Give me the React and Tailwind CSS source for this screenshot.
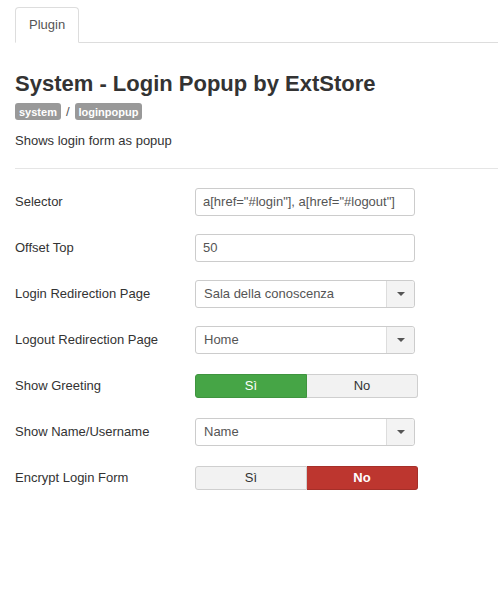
import React from 'react'

const Caret = () => (
  <svg width="8" height="4" viewBox="0 0 8 4" className="block">
    <path d="M0 0 L8 0 L4 4 Z" fill="#555" />
  </svg>
)

const TextField = ({ value }) => (
  <div className="w-[220px] h-[28px] border border-[#cccccc] rounded-[3px] bg-white flex items-center px-[7px] text-[13px] text-[#555]">
    {value}
  </div>
)

const SelectField = ({ value }) => (
  <div className="w-[220px] h-[28px] border border-[#cccccc] rounded-[3px] bg-white flex text-[13px] text-[#555]">
    <div className="flex-1 flex items-center px-[8px]">{value}</div>
    <div className="w-[28px] border-l border-[#dddddd] bg-[#f3f3f3] rounded-r-[3px] flex items-center justify-center">
      <Caret />
    </div>
  </div>
)

const Toggle = ({ on }) => (
  <div className="w-[223px] h-[24px] flex text-[13px]">
    <div
      className={
        on
          ? 'flex-1 flex items-center justify-center rounded-l-[3px] bg-[#46a546] border border-[#3f943f] text-white'
          : 'flex-1 flex items-center justify-center rounded-l-[3px] bg-[#f2f2f2] border border-[#cfcfcf] text-[#333]'
      }
    >
      Sì
    </div>
    <div
      className={
        on
          ? 'flex-1 flex items-center justify-center rounded-r-[3px] bg-[#f2f2f2] border border-l-0 border-[#cfcfcf] text-[#333]'
          : 'flex-1 flex items-center justify-center rounded-r-[3px] bg-[#bd362f] border border-l-0 border-[#a52f29] text-white font-bold'
      }
    >
      No
    </div>
  </div>
)

const fields = [
  { label: 'Selector', el: <TextField value='a[href="#login"], a[href="#logout"]' /> },
  { label: 'Offset Top', el: <TextField value="50" /> },
  { label: 'Login Redirection Page', el: <SelectField value="Sala della conoscenza" /> },
  { label: 'Logout Redirection Page', el: <SelectField value="Home" /> },
  { label: 'Show Greeting', el: <Toggle on /> },
  { label: 'Show Name/Username', el: <SelectField value="Name" /> },
  { label: 'Encrypt Login Form', el: <Toggle on={false} /> },
]

export default function App() {
  return (
    <div className="w-[498px] h-[594px] bg-white pl-[15px] pt-[7px] text-[#333] font-['Liberation_Sans',Arial,sans-serif]">
      <div className="flex border-b border-[#dddddd]">
        <div className="h-[36px] -mb-px px-[13px] border border-b-white border-[#dddddd] rounded-t-[4px] bg-white flex items-center text-[13px] text-[#555]">
          Plugin
        </div>
      </div>

      <h1 className="mt-[28px] text-[22px] leading-[26px] font-bold text-[#333]">
        System - Login Popup by ExtStore
      </h1>

      <div className="mt-[5px] flex items-center gap-[5px]">
        <span className="h-[17px] px-[4px] rounded-[3px] bg-[#999] text-white text-[11px] font-bold flex items-center">system</span>
        <span className="text-[13px] text-[#555]">/</span>
        <span className="h-[17px] px-[4px] rounded-[3px] bg-[#999] text-white text-[11px] font-bold flex items-center">loginpopup</span>
      </div>

      <p className="mt-[10px] text-[13px] leading-[18px]">Shows login form as popup</p>

      <div className="mt-[18px] border-t border-[#e5e5e5]" />

      <div className="mt-[10px] flex flex-col">
        {fields.map(f => (
          <div key={f.label} className="h-[46px] flex items-center">
            <div className="w-[180px] text-[13px]">{f.label}</div>
            {f.el}
          </div>
        ))}
      </div>
    </div>
  )
}
